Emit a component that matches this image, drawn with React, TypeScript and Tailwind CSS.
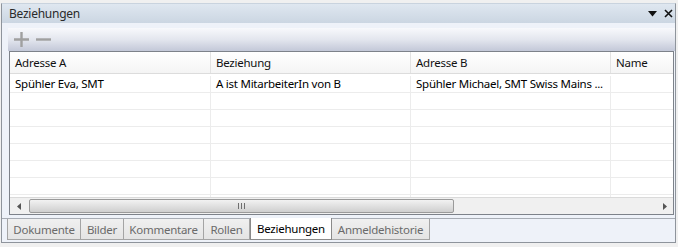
import React from 'react';

const columns = [
    { label: 'Adresse A', width: 'w-[201px]' },
    { label: 'Beziehung', width: 'w-[200px]' },
    { label: 'Adresse B', width: 'w-[200px]' },
    { label: 'Name', width: 'w-[100px]' },
];

const rows: string[][] = [
    ['Spühler Eva, SMT', 'A ist MitarbeiterIn von B', 'Spühler Michael, SMT Swiss Mains ...', ''],
    ['', '', '', ''],
    ['', '', '', ''],
    ['', '', '', ''],
    ['', '', '', ''],
    ['', '', '', ''],
    ['', '', '', ''],
    ['', '', '', ''],
];

const tabs = ['Dokumente', 'Bilder', 'Kommentare', 'Rollen', 'Beziehungen', 'Anmeldehistorie'];
const tabWidths = ['w-[74px]', 'w-[43px]', 'w-[80px]', 'w-[46px]', 'w-[82px]', 'w-[98px]'];

const App: React.FC = () => {
    return (
        <div
            className="w-[678px] h-[247px] bg-[#f0f0f0] pt-[3px] overflow-hidden text-[11.5px] tracking-[-0.25px] leading-none"
            style={{ fontFamily: '"Noto Sans", "Open Sans", sans-serif' }}
        >
            {/* Panel frame */}
            <div className="ml-[1px] w-[675px] h-[240px] border border-[#8e949c] border-t-[#c9d3de] flex flex-col bg-[#eef2f9]">
                {/* Title bar */}
                <div className="h-[19px] shrink-0 flex items-center justify-between pl-[7px] pr-[2px] bg-gradient-to-b from-[#dfe7f0] to-[#cbd6e2] text-[#2a2a2a]">
                    <span className="text-[12px]">Beziehungen</span>
                    <div className="flex items-center gap-[7px] text-black">
                        <svg width="9" height="6" viewBox="0 0 9 6">
                            <path d="M0 0h9L4.5 5.5z" fill="#111" />
                        </svg>
                        <svg width="9" height="9" viewBox="0 0 9 9">
                            <path d="M1 1l7 7M8 1L1 8" stroke="#111" strokeWidth="1.6" />
                        </svg>
                    </div>
                </div>

                {/* Body */}
                <div className="flex-1 flex flex-col pt-[5px]">
                    {/* Toolbar */}
                    <div className="ml-[6px] h-[23px] shrink-0 flex items-center gap-[7px] pl-[6px] bg-gradient-to-b from-[#f8f9fc] via-[#e3e6ee] to-[#c3c8d8]">
                        <svg width="15" height="15" viewBox="0 0 15 15">
                            <path d="M7.5 0v15M0 7.5h15" stroke="#a0a0a0" strokeWidth="2.4" />
                        </svg>
                        <svg width="15" height="15" viewBox="0 0 15 15">
                            <path d="M0 7.5h15" stroke="#a0a0a0" strokeWidth="2.4" />
                        </svg>
                    </div>

                    {/* Grid */}
                    <div className="ml-[7px] w-[665px] h-[164px] shrink-0 border border-[#7d828a] bg-white flex flex-col overflow-hidden">
                        <div className="flex-1 overflow-hidden">
                            {/* Header */}
                            <div className="flex h-[22px] border-b border-[#dcdcdc] bg-gradient-to-b from-white to-[#f4f4f4]">
                                {columns.map((c) => (
                                    <div
                                        key={c.label}
                                        className={`${c.width} shrink-0 flex items-center pl-[5px] pt-[1px] border-r border-[#e2e2e2] text-[#111]`}
                                    >
                                        {c.label}
                                    </div>
                                ))}
                            </div>
                            {/* Rows */}
                            {rows.map((r, i) => (
                                <div
                                    key={i}
                                    className={`flex border-b border-[#ececec] ${i === 0 ? 'h-[19px] pt-[2px]' : 'h-[17px]'}`}
                                >
                                    {r.map((cell, j) => (
                                        <div
                                            key={j}
                                            className={`${columns[j].width} shrink-0 flex items-center pl-[5px] border-r border-[#ececec] text-black whitespace-nowrap overflow-hidden`}
                                        >
                                            {cell}
                                        </div>
                                    ))}
                                </div>
                            ))}
                        </div>

                        {/* Horizontal scrollbar */}
                        <div className="h-[17px] shrink-0 flex items-center bg-[#f0f0f0] border-t border-[#dadada]">
                            <div className="w-[17px] h-full flex items-center justify-center">
                                <svg width="4" height="7" viewBox="0 0 4 7">
                                    <path d="M4 0v7L0 3.5z" fill="#555" />
                                </svg>
                            </div>
                            <div className="ml-[2px] w-[425px] h-[14px] rounded-[2px] border border-[#9a9a9a] bg-gradient-to-b from-[#f2f2f2] to-[#cfcfcf] flex items-center justify-center">
                                <div className="flex gap-[1px]">
                                    <span className="w-[1px] h-[6px] bg-[#6f6f6f]" />
                                    <span className="w-[1px] h-[6px] bg-[#6f6f6f] ml-[1px]" />
                                    <span className="w-[1px] h-[6px] bg-[#6f6f6f] ml-[1px]" />
                                </div>
                            </div>
                            <div className="flex-1" />
                            <div className="w-[17px] h-full flex items-center justify-center">
                                <svg width="4" height="7" viewBox="0 0 4 7">
                                    <path d="M0 0v7L4 3.5z" fill="#555" />
                                </svg>
                            </div>
                        </div>
                    </div>

                    {/* Tab strip */}
                    <div className="flex-1 mt-[3px] flex pl-[5px] border-t border-[#a7acb4]">
                        {tabs.map((t, i) => {
                            const active = t === 'Beziehungen';
                            return (
                                <div
                                    key={t}
                                    className={`${tabWidths[i]} shrink-0 h-[21px] flex items-center justify-center pt-[1px] border-b border-r ${i === 0 ? 'border-l' : ''} ${
                                        active
                                            ? 'bg-white text-black border-[#8a8a8a] border-l -mt-[1px] h-[22px]'
                                            : 'bg-gradient-to-b from-[#f0f0f0] to-[#e4e4e4] text-[#6a6a6a] border-[#a4a4a4]'
                                    }`}
                                >
                                    {t}
                                </div>
                            );
                        })}
                    </div>
                </div>
            </div>
        </div>
    );
};

export default App;
